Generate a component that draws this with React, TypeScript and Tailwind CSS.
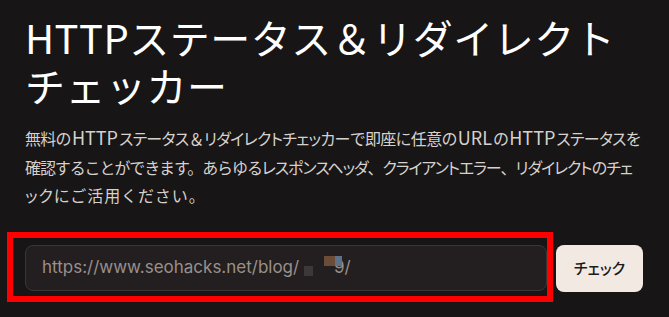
import { useState } from 'react';

// katakana runs are set proportional, latin runs a little larger, like the reference's font
function Jp({ text, className }: { text: string; className: string }) {
  const parts = text.split(/([\u30A0-\u30FF]+|[A-Za-z]+)/);
  return (
    <span className={className}>
      {parts.map((p, i) => {
        if (/^[\u30A0-\u30FF]+$/.test(p)) {
          return (
            <span key={i} className="[font-feature-settings:'palt']">
              {p}
            </span>
          );
        }
        if (/^[A-Za-z]+$/.test(p)) {
          return (
            <span key={i} className="mx-[1px] text-[18px] leading-none tracking-normal">
              {p}
            </span>
          );
        }
        return <span key={i}>{p}</span>;
      })}
    </span>
  );
}

export default function App() {
  const [url, setUrl] = useState('https://www.seohacks.net/blog/');

  return (
    <div className="relative min-h-screen w-full overflow-hidden bg-[#171516] font-['Noto_Sans_CJK_JP','Noto_Sans',sans-serif]">
      <div className="px-[25px] pt-[13px]">
        <h1 className="text-[40px] leading-[48px] font-normal text-white tracking-[0.5px]">
          HTTPステータス＆リダイレクト
          <br />
          チェッカー
        </h1>

        <p className="mt-[15px] text-[16px] leading-[28.5px] text-[#d6d1cd] whitespace-nowrap">
          <Jp
            className="tracking-[-0.7px]"
            text="無料のHTTPステータス＆リダイレクトチェッカーで即座に任意のURLのHTTPステータスを"
          />
          <br />
          <Jp
            className="tracking-[-1.1px]"
            text="確認することができます。あらゆるレスポンスヘッダ、クライアントエラー、リダイレクトのチェ"
          />
          <br />
          <Jp className="tracking-[0.9px]" text="ックにご活用ください。" />
        </p>

        <div className="mt-[35px] flex items-center gap-[9px]">
          <div className="relative h-[46px] w-[522px] rounded-[8px] border border-[#3a3536] bg-[#231f20] flex items-center pl-[16px] pr-[8px]">
            <input
              value={url}
              onChange={(e) => setUrl(e.target.value)}
              className="w-full bg-transparent outline-none text-[17px] text-[#9a908b] font-['Inter',sans-serif]"
            />
            {/* rest of the url, partly redacted */}
            <span className="absolute inset-y-0 left-[308px] flex items-center text-[17px] text-[#9a908b] font-['Inter',sans-serif]">
              9/
            </span>
            <div className="absolute left-[278px] top-[20px] h-[10px] w-[9px] bg-[#3b3838]" />
            <div className="absolute left-[298px] top-[10px] h-[10px] w-[11px] bg-[#6b4c38]" />
            <div className="absolute left-[309px] top-[10px] h-[10px] w-[7px] bg-[#5f7188]" />
          </div>
          <button className="h-[47px] w-[87px] rounded-[8px] bg-[#f2e9e3] text-[15px] font-medium text-[#1c1a1a] [font-feature-settings:'palt']">
            チェック
          </button>
        </div>
      </div>

      {/* highlight box */}
      <div className="pointer-events-none absolute left-[7px] top-[232px] h-[70px] w-[546px] border-[6px] border-[#ff0000]" />
    </div>
  );
}
